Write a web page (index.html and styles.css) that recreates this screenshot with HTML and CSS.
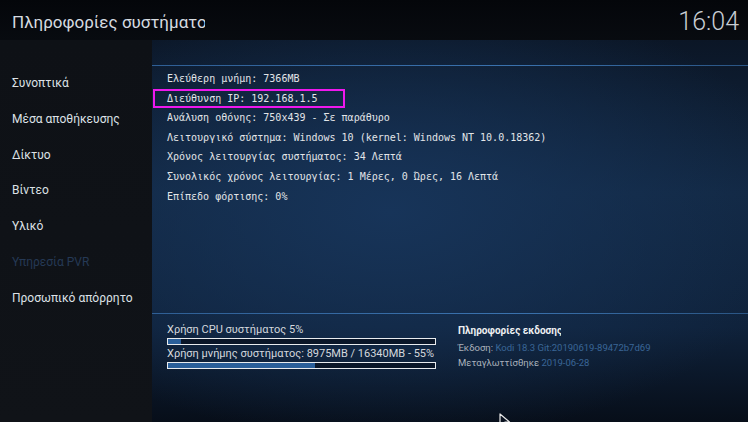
FILE: index.html
```html
<!DOCTYPE html>
<html lang="el">
<head>
<meta charset="utf-8">
<link rel="stylesheet" href="styles.css">
</head>
<body>
<div class="app">
  <header class="topbar">
    <div class="title">Πληροφορίες συστήματος</div>
    <div class="clock">16:04</div>
  </header>
  <div class="main">
    <nav class="sidebar">
      <div class="nav-item">Συνοπτικά</div>
      <div class="nav-item">Μέσα αποθήκευσης</div>
      <div class="nav-item">Δίκτυο</div>
      <div class="nav-item">Βίντεο</div>
      <div class="nav-item">Υλικό</div>
      <div class="nav-item dim">Υπηρεσία PVR</div>
      <div class="nav-item">Προσωπικό απόρρητο</div>
    </nav>
    <section class="content">
      <div class="rule rule-top"></div>
      <div class="info">
        <div class="row">Ελεύθερη μνήμη: 7366MB</div>
        <div class="row highlight">Διεύθυνση IP: 192.168.1.5</div>
        <div class="row">Ανάλυση οθόνης: 750x439 - Σε παράθυρο</div>
        <div class="row">Λειτουργικό σύστημα: Windows 10 (kernel: Windows NT 10.0.18362)</div>
        <div class="row">Χρόνος λειτουργίας συστήματος: 34 Λεπτά</div>
        <div class="row">Συνολικός χρόνος λειτουργίας: 1 Μέρες, 0 Ώρες, 16 Λεπτά</div>
        <div class="row">Επίπεδο φόρτισης: 0%</div>
      </div>
      <div class="rule rule-bottom"></div>
      <div class="bottom">
        <div class="usage">
          <div class="usage-label">Χρήση CPU συστήματος 5%</div>
          <div class="bar"><div class="fill" style="width:5%"></div></div>
          <div class="usage-label">Χρήση μνήμης συστήματος: 8975MB / 16340MB - 55%</div>
          <div class="bar"><div class="fill" style="width:55%"></div></div>
        </div>
        <div class="version">
          <div class="version-title">Πληροφορίες εκδοσης</div>
          <div class="version-line">Έκδοση: <span class="val">Kodi 18.3 Git:20190619-89472b7d69</span></div>
          <div class="version-line">Μεταγλωττίσθηκε <span class="val">2019-06-28</span></div>
        </div>
      </div>
      <svg class="cursor" width="12" height="16" viewBox="0 0 12 16"><path d="M1 1 L1 13 L4 10 L6.5 15 L8.5 14 L6 9 L10.5 9 Z" fill="#0a1220" stroke="#e8e8e8" stroke-width="1.2" stroke-linejoin="round"/></svg>
    </section>
  </div>
</div>
</body>
</html>
```

FILE: styles.css
```css
* { box-sizing: border-box; }
html, body { margin: 0; padding: 0; }
body {
  width: 748px;
  height: 422px;
  overflow: hidden;
  background: #05070b;
  font-family: Roboto, "Noto Sans", sans-serif;
  color: #d9dde2;
}
.app {
  width: 748px;
  height: 422px;
  display: flex;
  flex-direction: column;
  position: relative;
}
.topbar {
  height: 40px;
  display: flex;
  justify-content: space-between;
  align-items: center;
  padding: 0 9px 0 12px;
  background: linear-gradient(180deg, #04060a 0%, #080b10 100%);
}
.title {
  font-size: 17px;
  color: #d6dbe0;
  width: 193px;
  overflow: hidden;
  white-space: nowrap;
  margin-top: 4px;
}
.clock {
  font-size: 25px;
  font-weight: 300;
  color: #c9ced4;
  margin-top: 2px;
}
.main {
  flex: 1;
  display: flex;
  min-height: 0;
}
.sidebar {
  width: 152px;
  background: linear-gradient(180deg, #0e1116 0%, #101318 100%);
  display: flex;
  flex-direction: column;
  padding-top: 34px;
}
.nav-item {
  height: 35.8px;
  padding-left: 12px;
  font-size: 12px;
  color: #dde1e6;
  line-height: 18px;
}
.nav-item.dim { color: #253955; }
.content {
  flex: 1;
  position: relative;
  display: flex;
  flex-direction: column;
  background:
    radial-gradient(ellipse 70% 60% at 40% 45%, #173459 0%, rgba(23,52,89,0) 100%),
    linear-gradient(180deg, #0b1626 0%, #122843 40%, #0f223b 75%, #070e19 100%);
}
.rule {
  height: 1px;
  background: linear-gradient(90deg, #2f5f95 0%, #3a72ae 60%, #2a5584 100%);
}
.rule-top { margin-top: 25px; }
.info {
  padding: 3px 0 0 15px;
  font-family: "DejaVu Sans Mono", monospace;
  font-size: 10px;
  color: #e2e5e8;
  height: 247px;
}
.row {
  height: 19.6px;
  line-height: 19.6px;
  white-space: nowrap;
}
.row.highlight {
  margin-left: -14px;
  padding-left: 12px;
  width: 192px;
  border: 2px solid #ee18ee;
  line-height: 15.6px;
}
.bottom {
  display: flex;
  padding: 9px 0 0 15px;
}
.usage {
  width: 269px;
  font-size: 11px;
  color: #d4d8dd;
}
.usage-label {
  line-height: 13px;
  white-space: nowrap;
}
.bar {
  height: 7px;
  border: 1px solid #e8ebee;
  background: #0a1628;
  margin: 2px 0 2px 0;
  position: relative;
}
.fill {
  height: 100%;
  background: #2a5f9a;
}
.version {
  margin-left: 22px;
  padding-top: 1px;
}
.version-title {
  font-size: 10px;
  font-weight: bold;
  color: #eef0f2;
  width: 103px;
  overflow: hidden;
  white-space: nowrap;
  line-height: 13px;
  margin-bottom: 3px;
}
.version-line {
  font-size: 9.5px;
  color: #aab2bc;
  line-height: 15px;
  white-space: nowrap;
}
.val { color: #3a6697; }
.cursor {
  position: absolute;
  left: 347px;
  top: 373px;
}
```
